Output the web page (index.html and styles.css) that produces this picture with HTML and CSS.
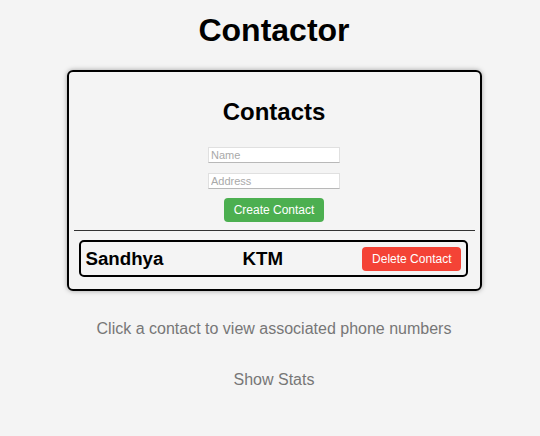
FILE: index.html
```html
<!DOCTYPE html>
<html>
<head>
<meta charset="utf-8">
<title>Contactor</title>
<link rel="stylesheet" href="styles.css">
</head>
<body>
<div class="app">
  <h1 class="title">Contactor</h1>
  <div class="card">
    <h2 class="card-title">Contacts</h2>
    <div class="form">
      <input class="field" type="text" placeholder="Name">
      <input class="field" type="text" placeholder="Address">
      <button class="btn btn-create">Create Contact</button>
    </div>
    <div class="rule"></div>
    <div class="contact">
      <span class="contact-name">Sandhya</span>
      <span class="contact-addr">KTM</span>
      <button class="btn btn-delete">Delete Contact</button>
    </div>
  </div>
  <p class="hint">Click a contact to view associated phone numbers</p>
  <p class="stats">Show Stats</p>
</div>
</body>
</html>
```
FILE: styles.css
```css
html, body {
  margin: 0;
  padding: 0;
  background: #f4f4f4;
}
body {
  margin-left: 8px;
  font-family: "Liberation Sans", Arial, sans-serif;
}
.app {
  display: flex;
  flex-direction: column;
  align-items: center;
}
.title {
  margin: 12px 0 21px;
  font-size: 32px;
  font-weight: bold;
  line-height: 37px;
  color: #000;
}
.card {
  box-sizing: border-box;
  width: 415px;
  border: 2px solid #000;
  border-radius: 6px;
  box-shadow: 0 0 5px rgba(0, 0, 0, 0.35);
  padding: 26px 0 12px;
  display: flex;
  flex-direction: column;
}
.card-title {
  margin: 0;
  text-align: center;
  font-size: 24px;
  line-height: 28px;
  font-weight: bold;
}
.form {
  margin-top: 21px;
  display: flex;
  flex-direction: column;
  align-items: center;
}
.field {
  box-sizing: border-box;
  width: 132px;
  height: 16px;
  margin: 0 0 10px;
  padding: 0 2px;
  border: 1px solid #e0e0e0;
  border-bottom-color: #b8b8b8;
  background: #fff;
  font-family: "Liberation Sans", Arial, sans-serif;
  font-size: 11px;
  outline: none;
}
.field::placeholder {
  color: #a9a9a9;
}
.field + .btn {
  margin-top: -1px;
}
.btn {
  height: 24px;
  padding: 0 10px;
  border: none;
  border-radius: 4px;
  color: #fff;
  font-family: "Liberation Sans", Arial, sans-serif;
  font-size: 12px;
  line-height: 24px;
}
.btn-create {
  background: #4caf50;
}
.btn-delete {
  background: #f44336;
}
.rule {
  height: 1px;
  background: #333;
  margin: 8px 5px 0;
}
.contact {
  margin: 9px 12px 0 10px;
  height: 37px;
  box-sizing: border-box;
  border: 2px solid #000;
  border-radius: 5px;
  padding: 0 4px 0 5px;
  display: flex;
  align-items: center;
  justify-content: space-between;
}
.contact-name,
.contact-addr {
  font-size: 18.7px;
  font-weight: bold;
  color: #000;
}
.hint {
  margin: 29px 0 0;
  font-size: 16px;
  line-height: 18px;
  color: #777;
}
.stats {
  margin: 33px 0 0;
  font-size: 16px;
  line-height: 18px;
  color: #777;
}
```
